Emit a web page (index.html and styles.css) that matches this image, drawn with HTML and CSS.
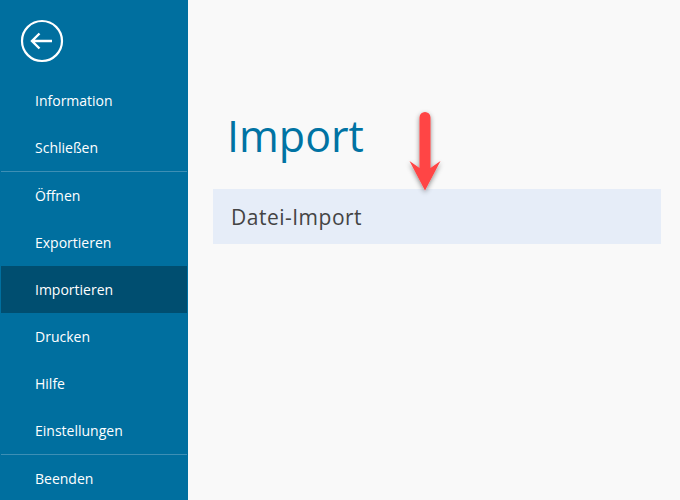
FILE: index.html
```html
<!DOCTYPE html>
<html lang="de">
<head>
<meta charset="utf-8">
<title>Import</title>
<link rel="stylesheet" href="styles.css">
</head>
<body>
<div class="app">
  <nav class="sidebar">
    <div class="back">
      <svg class="back-icon" width="44" height="44" viewBox="0 0 44 44" fill="none" stroke="#fff">
        <circle cx="22" cy="22" r="20" stroke-width="2.200"/>
        <path d="M11.500 22H32M19.500 14.500l-7.500 7.500 7.500 7.500" stroke-width="2.400"/>
      </svg>
    </div>
    <ul class="group first">
      <li class="item">Information</li>
      <li class="item">Schließen</li>
    </ul>
    <ul class="group">
      <li class="item">Öffnen</li>
      <li class="item">Exportieren</li>
      <li class="item active">Importieren</li>
      <li class="item">Drucken</li>
      <li class="item">Hilfe</li>
      <li class="item">Einstellungen</li>
    </ul>
    <ul class="group">
      <li class="item">Beenden</li>
    </ul>
  </nav>
  <main class="content">
    <h1 class="title">Import</h1>
    <div class="row">Datei-Import</div>
    <svg class="arrow" width="50" height="95" viewBox="0 0 50 95">
      <defs>
        <filter id="shadow" x="-30%" y="-20%" width="160%" height="140%">
          <feDropShadow dx="0" dy="2" stdDeviation="2.500" flood-color="#000" flood-opacity="0.45"/>
        </filter>
      </defs>
      <path filter="url(#shadow)" fill="#ff4444" d="M19.500 12.500a5.500 5.500 0 0 1 11 0V63L40.500 56 25 85.500 9.500 56 19.500 63Z"/>
    </svg>
  </main>
</div>
</body>
</html>
```
FILE: styles.css
```css
* { box-sizing: border-box; }
html, body { margin: 0; padding: 0; }
body {
  width: 680px;
  height: 500px;
  overflow: hidden;
  font-family: "Open Sans", "Liberation Sans", sans-serif;
  background: #f9f9f9;
}
.app { display: flex; height: 500px; }
.sidebar {
  width: 188px;
  flex: none;
  background: #006f9f;
  color: #fff;
  padding: 0 1px;
}
.back { height: 77px; padding: 19px 0 0 19px; }
.back-icon { display: block; }
.group { list-style: none; margin: 0; padding: 0; border-top: 1px solid #3d8fb5; }
.group.first { border-top: 0; }
.item {
  height: 47px;
  padding-left: 34px;
  font-size: 14px;
  line-height: 47px;
}
.active { background: #004e70; }
.content { flex: 1; position: relative; padding: 106px 19px 0 25px; }
.title {
  margin: 0;
  font-size: 43px;
  font-weight: 400;
  line-height: 60px;
  color: #0073a3;
  padding-left: 14px;
}
.row {
  margin-top: 23px;
  height: 55px;
  padding-left: 18px;
  background: #e6edf8;
  color: #444;
  font-size: 21px;
  letter-spacing: 0.5px;
  line-height: 56px;
}
.arrow { position: absolute; left: 212px; top: 105px; }
```
